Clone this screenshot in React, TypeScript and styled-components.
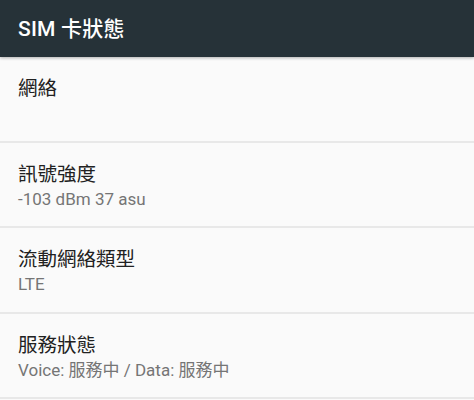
import styled, { createGlobalStyle } from "styled-components";

const GlobalStyle = createGlobalStyle`
  html, body {
    margin: 0;
    padding: 0;
    background: #fafafa;
  }
  body {
    font-family: Roboto, "Noto Sans CJK TC", sans-serif;
  }
`;

interface Item {
  title: string;
  summary: string;
}

const items: Item[] = [
  { title: "網絡", summary: "" },
  { title: "訊號強度", summary: "-103 dBm 37 asu" },
  { title: "流動網絡類型", summary: "LTE" },
  { title: "服務狀態", summary: "Voice: 服務中 / Data: 服務中" },
];

const App = () => {
  return (
    <Screen>
      <GlobalStyle />
      <Toolbar>
        <ToolbarTitle>SIM 卡狀態</ToolbarTitle>
      </Toolbar>
      <List>
        {items.map((item) => (
          <Row key={item.title}>
            <RowTitle>{item.title}</RowTitle>
            {item.summary && <RowSummary>{item.summary}</RowSummary>}
          </Row>
        ))}
      </List>
    </Screen>
  );
};

const Screen = styled.div`
  width: 474px;
  height: 400px;
  overflow: hidden;
  background: #fafafa;
  display: flex;
  flex-direction: column;
`;

const Toolbar = styled.header`
  position: relative;
  z-index: 1;
  height: 57px;
  flex-shrink: 0;
  background: #263238;
  display: flex;
  align-items: center;
  padding: 0 18px;
  box-shadow: 0 1px 3px rgba(0, 0, 0, 0.3);
`;

const ToolbarTitle = styled.h1`
  margin: 0;
  margin-top: -4px;
  color: #ffffff;
  font-family: Roboto, "Noto Sans CJK TC", sans-serif;
  font-size: 21px;
  font-weight: 500;
  letter-spacing: 0.2px;
`;

const List = styled.div`
  display: flex;
  flex-direction: column;
`;

const Row = styled.div`
  height: 83.5px;
  box-sizing: content-box;
  border-bottom: 2px solid #e8e8e8;
  padding: 0 18px;
  display: flex;
  flex-direction: column;
`;

const RowTitle = styled.div`
  margin-top: 18px;
  color: #212121;
  font-size: 19.5px;
  line-height: 27px;
`;

const RowSummary = styled.div`
  color: #757575;
  font-size: 17px;
  line-height: 23px;
`;

export default App;
